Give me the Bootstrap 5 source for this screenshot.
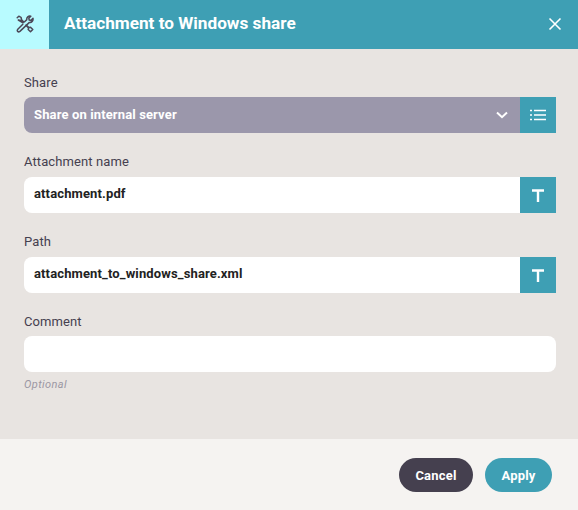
<!DOCTYPE html>
<html lang="en">
<head>
    <meta charset="UTF-8">
    <meta name="viewport" content="width=device-width, initial-scale=1.0">
    <title>Attachment to Windows share</title>
    <link href="https://cdn.jsdelivr.net/npm/bootstrap@5.3.0/dist/css/bootstrap.min.css" rel="stylesheet">
    <style>
        html, body { height: 100%; }
        body {
            font-family: Roboto, "Liberation Sans", sans-serif;
            background-color: #e8e4e1;
            color: #45404f;
            overflow: hidden;
        }
        .dialog-wrap { height: 510px; }
        .dialog-head { height: 49px; background-color: #3e9fb4; color: #fff; }
        .head-icon { width: 49px; background-color: #b8fbff; padding-bottom: 2px; }
        .head-title { font-size: 17.2px; font-weight: 700; padding: 0 0 2px 15px; }
        .head-close { width: 46px; background: none; border: 0; padding-bottom: 3px; }
        .dialog-body { padding: 24px 22px 0 24px; }
        .field-label { font-size: 13px; line-height: 20px; height: 18px; margin-bottom: 7px; letter-spacing: .1px; }
        .field-label.tight { margin-bottom: 6px; }
        .field-group { height: 36px; margin-bottom: 19px; }
        .field-input {
            height: 36px;
            font-size: 13px;
            font-weight: 700;
            letter-spacing: .13px;
            color: #222;
            background-color: #fff;
            border: 0;
            border-radius: 8px 0 0 8px;
            padding: 0 10px 3px;
            box-shadow: none;
        }
        .field-input.whole { border-radius: 8px; }
        .field-select {
            height: 36px;
            font-size: 13px;
            font-weight: 700;
            letter-spacing: .13px;
            color: #fff;
            background-color: #9b97ab;
            border-radius: 8px 0 0 8px;
            padding: 0 12px 1px 10px;
        }
        .side-btn {
            width: 36px;
            height: 36px;
            background-color: #3e9fb4;
            flex-shrink: 0;
        }
        .hint-text { font-size: 11px; font-style: italic; color: #9b97a3; line-height: 14px; margin-top: 6px; letter-spacing: .4px; }
        .dialog-foot { height: 71px; background-color: #f5f3f1; padding-right: 26px; gap: 12px; }
        .pill-btn {
            height: 34px;
            border: 0;
            border-radius: 17px;
            color: #fff;
            font-size: 13px;
            font-weight: 700;
            letter-spacing: .2px;
            padding: 2px 0 0;
        }
        .pill-cancel { width: 74px; background-color: #45404f; }
        .pill-apply { width: 67px; background-color: #3e9fb4; }
    </style>
</head>
<body>
<div class="dialog-wrap d-flex flex-column">
    <div class="dialog-head d-flex align-items-stretch">
        <div class="head-icon d-flex align-items-center justify-content-center">
            <svg width="18" height="18" viewBox="0 0 18 18" fill="none" stroke="#4c4858" stroke-width="1.5" stroke-linejoin="round" stroke-linecap="round">
                <path d="M1.2 2.8 2.8 1.2 5 2.3 5.6 4.8 7.8 7M10.2 10 13 12.6 14.5 12.2 16.8 14.5 14.5 16.8 12.2 14.5 12.6 13 9.8 10.2M7 7.8 4.8 5.6 2.3 5Z"/>
                <path d="M8.6 6.8 10.8 4.6C10.4 2.4 12.4.6 14.8 1.2L12.8 3.2 13.2 5 15 5.4 17 3.4C17.4 5.8 15.6 7.8 13.4 7.4L3.9 16.4C2.2 17.7.5 15.9 1.8 14.2L6.8 9.2"/>
            </svg>
        </div>
        <div class="head-title flex-grow-1 d-flex align-items-center">Attachment to Windows share</div>
        <button type="button" class="head-close d-flex align-items-center justify-content-center" aria-label="Close">
            <svg width="14" height="14" viewBox="0 0 14 14" stroke="#fff" stroke-width="1.6" fill="none"><path d="M1.5 1.5 12.5 12.5M12.5 1.5 1.5 12.5"/></svg>
        </button>
    </div>

    <div class="dialog-body flex-grow-1">
        <div class="field-label tight">Share</div>
        <div class="field-group d-flex">
            <div class="field-select flex-grow-1 d-flex align-items-center justify-content-between">
                <span>Share on internal server</span>
                <svg width="12" height="8" viewBox="0 0 12 8" fill="none" stroke="#fff" stroke-width="2"><path d="M1 1.5 6 6.2 11 1.5"/></svg>
            </div>
            <div class="side-btn d-flex align-items-center justify-content-center">
                <svg width="16" height="12" viewBox="0 0 16 12" fill="none" stroke="#fff" stroke-width="1.6"><path d="M0 1.5H2M4 1.5H16M0 6H2M4 6H16M0 10.5H2M4 10.5H16"/></svg>
            </div>
        </div>

        <div class="field-label">Attachment name</div>
        <div class="field-group d-flex">
            <input type="text" class="form-control field-input flex-grow-1" value="attachment.pdf">
            <div class="side-btn d-flex align-items-center justify-content-center">
                <svg width="12" height="13" viewBox="0 0 12 13" fill="none" stroke="#fff" stroke-width="2.4"><path d="M0 1.5H12M6 1.5V13"/></svg>
            </div>
        </div>

        <div class="field-label">Path</div>
        <div class="field-group d-flex">
            <input type="text" class="form-control field-input flex-grow-1" value="attachment_to_windows_share.xml">
            <div class="side-btn d-flex align-items-center justify-content-center">
                <svg width="12" height="13" viewBox="0 0 12 13" fill="none" stroke="#fff" stroke-width="2.4"><path d="M0 1.5H12M6 1.5V13"/></svg>
            </div>
        </div>

        <div class="field-label tight">Comment</div>
        <input type="text" class="form-control field-input whole">
        <div class="hint-text">Optional</div>
    </div>

    <div class="dialog-foot d-flex align-items-center justify-content-end">
        <button type="button" class="btn pill-btn pill-cancel">Cancel</button>
        <button type="button" class="btn pill-btn pill-apply">Apply</button>
    </div>
</div>
<script src="https://cdn.jsdelivr.net/npm/bootstrap@5.3.0/dist/js/bootstrap.bundle.min.js"></script>
</body>
</html>
